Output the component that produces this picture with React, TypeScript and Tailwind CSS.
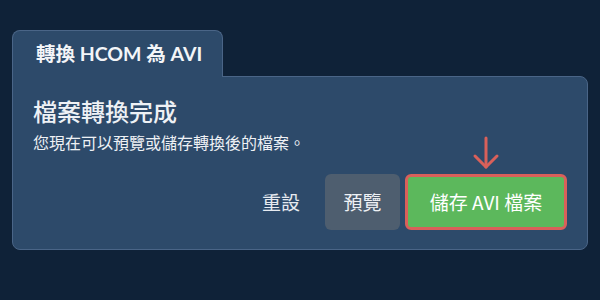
const font = { fontFamily: '"Noto Sans CJK TC", "Noto Sans", sans-serif' };

const DownArrow = () => (
  <svg width="28" height="34" viewBox="0 0 28 34" fill="none" stroke="#d9605a" strokeWidth="3" strokeLinecap="round" strokeLinejoin="round">
    <path d="M14 2 V31" />
    <path d="M3 20 L14 31 L25 20" />
  </svg>
);

export default function App() {
  return (
    <div className="w-[600px] h-[300px] bg-[#0f2238] pt-[30px] px-[12px]" style={font}>
      <div className="relative z-10 -mb-px flex h-[47px] w-[211px] items-center rounded-t-lg border border-b-0 border-[#4a6587] bg-[#2d4a6a] pl-[23px]">
        <span className="font-['Lato','Noto_Sans_CJK_TC',sans-serif] text-[19.5px] font-bold text-[#f3f5f8]">轉換 HCOM 為 AVI</span>
      </div>
      <div className="h-[174px] rounded-b-lg rounded-tr-lg border border-[#4a6587] bg-[#2d4a6a] px-[20px] pt-[18px]">
        <h1 className="text-[24px] leading-[32px] font-medium text-[#eef1f5]">檔案轉換完成</h1>
        <p className="mt-[4px] text-[16px] leading-[22px] text-[#eef1f5]">您現在可以預覽或儲存轉換後的檔案。</p>
        <div className="mt-[21px] flex items-center justify-end">
          <button className="mr-[25px] text-[19px] text-[#e6eaf0]">重設</button>
          <button className="mr-[5px] h-[56px] w-[75px] rounded-md bg-[#4e5e6f] text-[19px] text-[#eef1f5]">預覽</button>
          <div className="relative">
            <div className="absolute -top-[38px] left-1/2 -translate-x-1/2">
              <DownArrow />
            </div>
            <button className="h-[56px] w-[162px] rounded-md border-[3px] border-[#d9605a] bg-[#5cb85c] text-[19px] text-white">儲存 AVI 檔案</button>
          </div>
        </div>
      </div>
    </div>
  );
}
